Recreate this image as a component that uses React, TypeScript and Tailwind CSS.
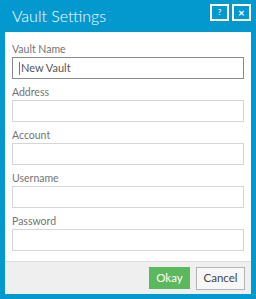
import React from 'react';

const fields = [
  { label: 'Vault Name', value: 'New Vault', focused: true },
  { label: 'Address', value: '' },
  { label: 'Account', value: '' },
  { label: 'Username', value: '' },
  { label: 'Password', value: '' },
];

const App = () => {
  return (
    <div className="w-[256px] h-[299px] bg-[#0399cf] px-[5px] pb-[5px] flex flex-col font-['Lato',sans-serif]">
      {/* Title bar */}
      <div className="h-[32px] flex items-center justify-between pl-[7px]">
        <span className="text-white text-[16px] font-light leading-none pb-[1px]">Vault Settings</span>
        <div className="flex gap-[3px] self-start mt-[4px]">
          <button className="w-[19px] h-[17px] border-2 border-white flex items-center justify-center text-white text-[7px] font-bold leading-none">
            ?
          </button>
          <button className="w-[19px] h-[17px] border-2 border-white flex items-center justify-center text-white text-[8px] font-bold leading-none">
            ✕
          </button>
        </div>
      </div>

      {/* Form body */}
      <div className="flex-1 bg-white px-[7px] pt-[9px] flex flex-col gap-[5px]">
        {fields.map((f) => (
          <div key={f.label} className="flex flex-col">
            <label className="h-[16px] leading-[16px] text-[10.5px] text-[#747474]">{f.label}</label>
            <div
              className={
                f.focused
                  ? 'h-[22px] border border-[#8a8a8a] flex items-center pl-[6px] text-[11px] text-[#555555]'
                  : 'h-[22px] border border-[#d6d6d6] flex items-center pl-[6px] text-[11px] text-[#555555]'
              }
            >
              {f.focused && <span className="w-px h-[13px] bg-[#777777]" />}
              <span className="pl-px">{f.value}</span>
            </div>
          </div>
        ))}
      </div>

      {/* Footer */}
      <div className="h-[33px] border-t border-[#dcdcdc] bg-[#efefef] flex items-center justify-end gap-[6px] pr-[6px]">
        <button className="w-[41px] h-[22px] bg-[#5cb85c] text-white text-[11.5px] leading-none">Okay</button>
        <button className="w-[49px] h-[23px] bg-[#f7f7f7] border border-[#b4b4b4] text-[#444444] text-[11.5px] leading-none">
          Cancel
        </button>
      </div>
    </div>
  );
};

export default App;
